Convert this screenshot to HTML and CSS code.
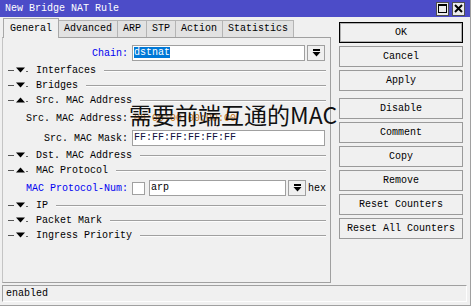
FILE: index.html
```html
<!DOCTYPE html>
<html>
<head>
<meta charset="utf-8">
<link rel="stylesheet" href="styles.css">
</head>
<body>
<div class="window">
  <div class="titlebar">
    <span class="title">New Bridge NAT Rule</span>
    <div class="tb-btns">
      <span class="tb-btn"><svg width="9" height="9" viewBox="0 0 9 9"><rect x="0.5" y="0.5" width="8" height="8" fill="none" stroke="#000"/><rect x="0" y="0" width="9" height="2" fill="#000"/></svg></span>
      <span class="tb-btn"><svg width="9" height="9" viewBox="0 0 9 9"><path d="M1 1L8 8M8 1L1 8" stroke="#000" stroke-width="2"/></svg></span>
    </div>
  </div>
  <div class="main">
    <div class="left">
      <div class="tabs">
        <div class="tab active">General</div>
        <div class="tab">Advanced</div>
        <div class="tab">ARP</div>
        <div class="tab">STP</div>
        <div class="tab">Action</div>
        <div class="tab">Statistics</div>
      </div>
      <div class="panel">
        <div class="field-row">
          <span class="lbl blue">Chain:</span>
          <span class="input w-chain"><span class="sel">dstnat</span></span>
          <span class="dd"><svg width="9" height="8" viewBox="0 0 9 8"><rect x="1" y="0" width="7" height="2" fill="#000"/><path d="M0.5 3h8l-4 4.5z" fill="#000"/></svg></span>
        </div>
        <div class="section"><svg viewBox="0 0 21 15"><rect x="0" y="7" width="6" height="1" fill="#555"/><path d="M8 4.5h9l-4.5 5z" fill="#000"/><rect x="18" y="8" width="2" height="1" fill="#666"/></svg><span class="name">Interfaces</span><span class="rule"></span></div>
        <div class="section"><svg viewBox="0 0 21 15"><rect x="0" y="7" width="6" height="1" fill="#555"/><path d="M8 4.5h9l-4.5 5z" fill="#000"/><rect x="18" y="8" width="2" height="1" fill="#666"/></svg><span class="name">Bridges</span><span class="rule"></span></div>
        <div class="section"><svg viewBox="0 0 21 15"><rect x="0" y="7" width="6" height="1" fill="#555"/><path d="M8 9.5h9l-4.5-5z" fill="#000"/><rect x="18" y="8" width="2" height="1" fill="#666"/></svg><span class="name">Src. MAC Address</span><span class="rule"></span></div>
        <div class="field-row">
          <span class="lbl">Src. MAC Address:</span>
          <span class="plain-value">00:00:00:00:00:00</span>
        </div>
        <div class="field-row">
          <span class="lbl">Src. MAC Mask:</span>
          <span class="input w-mask">FF:FF:FF:FF:FF:FF</span>
        </div>
        <div class="section"><svg viewBox="0 0 21 15"><rect x="0" y="7" width="6" height="1" fill="#555"/><path d="M8 4.5h9l-4.5 5z" fill="#000"/><rect x="18" y="8" width="2" height="1" fill="#666"/></svg><span class="name">Dst. MAC Address</span><span class="rule"></span></div>
        <div class="section"><svg viewBox="0 0 21 15"><rect x="0" y="7" width="6" height="1" fill="#555"/><path d="M8 9.5h9l-4.5-5z" fill="#000"/><rect x="18" y="8" width="2" height="1" fill="#666"/></svg><span class="name">MAC Protocol</span><span class="rule"></span></div>
        <div class="field-row">
          <span class="lbl blue">MAC Protocol-Num:</span>
          <span class="check"></span>
          <span class="input w-proto">arp</span>
          <span class="dd"><svg width="9" height="8" viewBox="0 0 9 8"><rect x="1" y="0" width="7" height="2" fill="#000"/><path d="M0.5 3h8l-4 4.5z" fill="#000"/></svg></span>
          <span class="hex">hex</span>
        </div>
        <div class="section"><svg viewBox="0 0 21 15"><rect x="0" y="7" width="6" height="1" fill="#555"/><path d="M8 4.5h9l-4.5 5z" fill="#000"/><rect x="18" y="8" width="2" height="1" fill="#666"/></svg><span class="name">IP</span><span class="rule"></span></div>
        <div class="section"><svg viewBox="0 0 21 15"><rect x="0" y="7" width="6" height="1" fill="#555"/><path d="M8 4.5h9l-4.5 5z" fill="#000"/><rect x="18" y="8" width="2" height="1" fill="#666"/></svg><span class="name">Packet Mark</span><span class="rule"></span></div>
        <div class="section"><svg viewBox="0 0 21 15"><rect x="0" y="7" width="6" height="1" fill="#555"/><path d="M8 4.5h9l-4.5 5z" fill="#000"/><rect x="18" y="8" width="2" height="1" fill="#666"/></svg><span class="name">Ingress Priority</span><span class="rule"></span></div>
        <div class="overlay-note">需要前端互通的MAC</div>
      </div>
    </div>
    <div class="buttons">
      <div class="btn ok">OK</div>
      <div class="btn">Cancel</div>
      <div class="btn">Apply</div>
      <div class="btn gap">Disable</div>
      <div class="btn">Comment</div>
      <div class="btn">Copy</div>
      <div class="btn">Remove</div>
      <div class="btn">Reset Counters</div>
      <div class="btn">Reset All Counters</div>
    </div>
  </div>
  <div class="status">enabled</div>
</div>
</body>
</html>
```

FILE: styles.css
```css
* { box-sizing: border-box; margin: 0; padding: 0; }
html, body { margin: 0; width: 471px; height: 306px; overflow: hidden; background: #f0f0f0; }
body { font-family: "Liberation Mono", monospace; font-size: 10px; color: #000; }

.window {
  width: 471px; height: 306px;
  border-right: 1px solid #a0a0a0;
  border-bottom: 1px solid #a0a0a0;
  display: flex; flex-direction: column;
  background: #f0f0f0;
}

.titlebar {
  height: 17px; flex: none;
  background: #4c4cc8;
  color: #fff;
  display: flex; align-items: center; justify-content: space-between;
  padding: 0 5px 0 5px;
}
.title { line-height: 17px; }
.tb-btns { display: flex; gap: 3px; }
.tb-btn {
  width: 13px; height: 14px;
  background: #ececec;
  border: 1px solid #505050;
  display: flex; align-items: center; justify-content: center;
}

.main { display: flex; height: 266px; flex: none; }
.left { width: 329px; margin-left: 2px; margin-top: 1px; display: flex; flex-direction: column; }

.tabs { display: flex; align-items: flex-end; height: 19px; padding-left: 1px; flex: none; }
.tab {
  height: 17px; padding: 0 5px;
  border: 1px solid #b4b4b4; border-bottom: none;
  background: #e2e2e2;
  line-height: 16px;
  margin-left: -1px;
  white-space: pre;
}
.tab.active {
  height: 20px; margin-left: 0; padding: 0 6px;
  background: #f0f0f0;
  margin-bottom: -1px; line-height: 19px;
  position: relative; z-index: 1;
  border-color: #a8a8a8;
}

.panel {
  height: 246px;
  border: 1px solid #a0a0a0;
  border-left-color: #c4c4c4;
  position: relative;
  padding-top: 5px;
}

.field-row { display: flex; align-items: center; height: 20px; }
.lbl { width: 125px; margin-right: 4px; text-align: right; white-space: pre; flex: none; }
.lbl.blue { color: #0000f0; }
.input {
  height: 16px; background: #fff;
  border: 1px solid #a0a0a0;
  padding-left: 1px; line-height: 14px;
  white-space: pre; flex: none;
}
.w-chain { width: 173px; }
.w-mask { width: 193px; color: #101040; }
.w-proto { width: 137px; }
.sel { background: #0078d7; color: #fff; }
.plain-value { padding-left: 2px; color: #c87818; white-space: pre; }
.dd {
  width: 18px; height: 16px; margin-left: 2px; flex: none;
  border: 1px solid #a0a0a0; background: #f0f0f0;
  display: flex; align-items: center; justify-content: center;
}
.check { width: 13px; height: 13px; background: #fff; border: 1px solid #a0a0a0; margin-right: 4px; flex: none; }
.hex { margin-left: 2px; }

.section { display: flex; align-items: center; height: 15px; }
.section svg { margin-left: 5px; width: 21px; height: 15px; flex: none; }
.section .name { margin-left: 7px; white-space: pre; }
.section .rule { flex: 1; height: 1px; background: #a0a0a0; margin: 0 4px 0 8px; box-shadow: 0 1px #fcfcfc; }

.overlay-note {
  position: absolute; left: 126px; top: 65px;
  font-family: "Noto Sans CJK SC", "Noto Sans", sans-serif;
  font-size: 23px; line-height: 23px;
  color: #111; white-space: nowrap;
}

.buttons { margin-left: 8px; margin-top: 5px; width: 124px; display: flex; flex-direction: column; gap: 3px; }
.btn {
  height: 21px; flex: none;
  border: 1px solid #9a9a9a;
  background: #f0f0f0;
  display: flex; align-items: center; justify-content: center;
  white-space: pre;
}
.btn.ok { border-color: #000; box-shadow: inset 0 0 0 1px #b0b0b0; }
.btn.gap { margin-top: 4px; }

.status {
  margin: 2px 0 0 2px; width: 465px; height: 17px; flex: none;
  border-top: 1px solid #a0a0a0; border-left: 1px solid #a0a0a0;
  border-bottom: 1px solid #fdfdfd; border-right: 1px solid #fdfdfd;
  padding-left: 3px; line-height: 15px;
}
```
